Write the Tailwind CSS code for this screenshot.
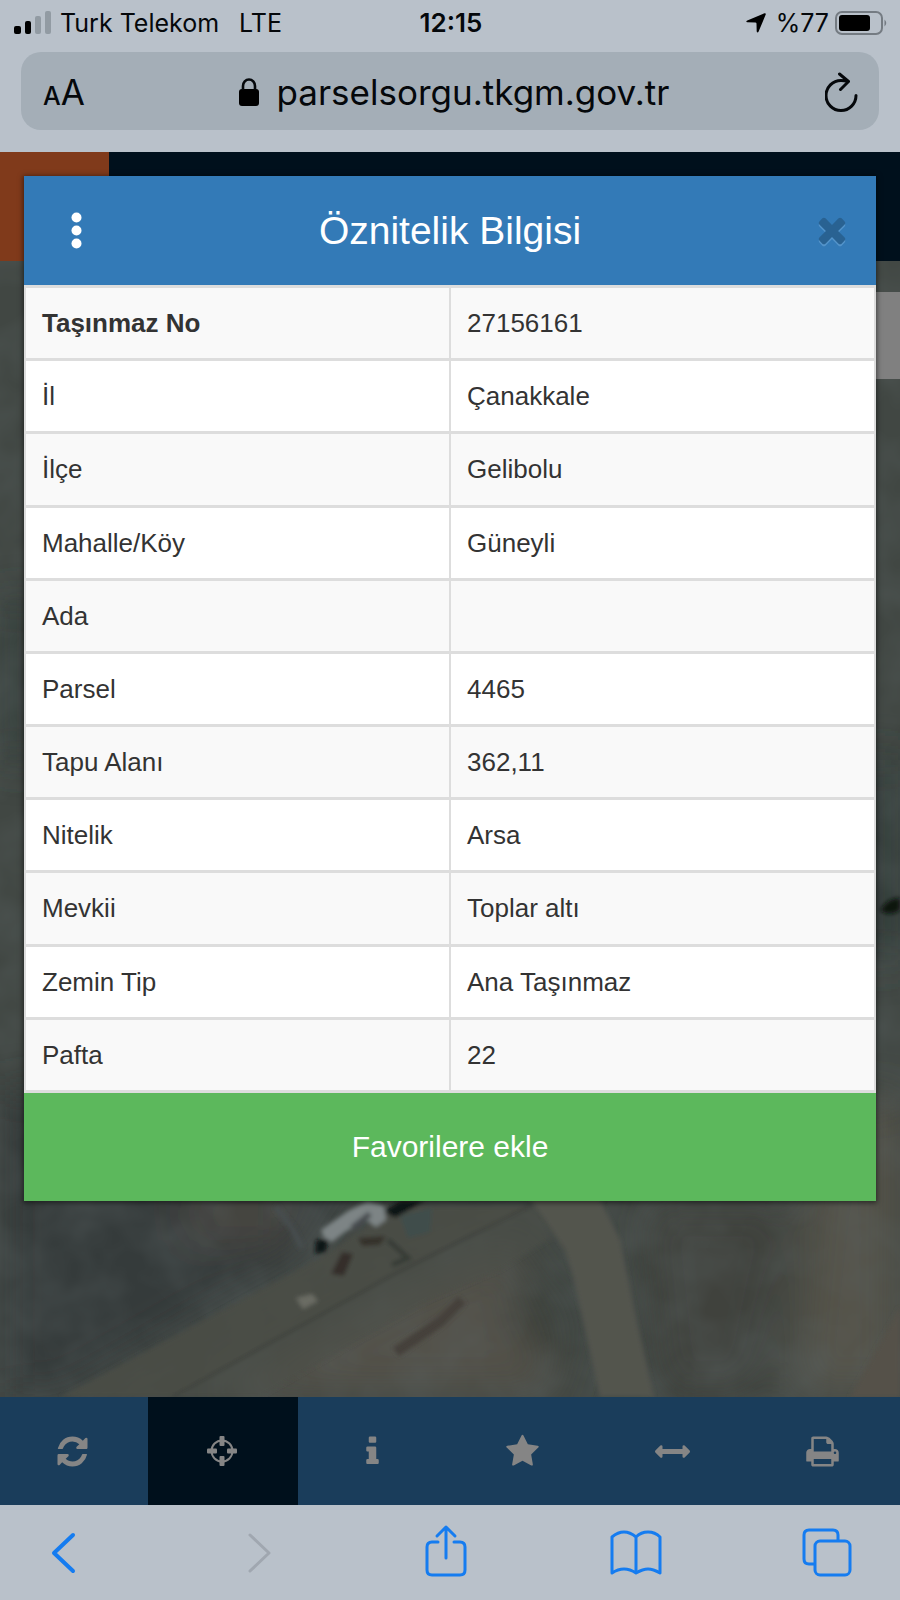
<!DOCTYPE html>
<html lang="tr">
<head>
<meta charset="utf-8">
<meta name="viewport" content="width=device-width, initial-scale=1">
<title>Öznitelik Bilgisi</title>
<script src="https://cdn.jsdelivr.net/npm/@tailwindcss/browser@4"></script>
</head>
<body class="flex min-h-screen flex-col bg-[#b9c1ca] font-['Liberation_Sans',Arial,sans-serif] text-[#333]">

<!-- Status bar and address bar -->
<header class="font-['Inter',sans-serif] text-[#05080b]">
  <div class="grid h-[46px] grid-cols-[1fr_auto_1fr] items-center pr-3 pl-3.5 text-[25px] leading-none">
    <div class="flex items-center gap-2">
      <svg class="h-6 w-[38px]" viewBox="0 0 38 24" aria-hidden="true">
        <rect x="0" y="15" width="7" height="8" rx="2"/>
        <rect x="11" y="10" width="6" height="13" rx="2"/>
        <rect x="21" y="5" width="6" height="18" rx="2" fill="#929ba3"/>
        <rect x="31" y="0" width="6" height="23" rx="2" fill="#929ba3"/>
      </svg>
      <span>Turk Telekom</span>
      <span class="ml-3">LTE</span>
    </div>
    <time class="text-[26px] font-semibold">12:15</time>
    <div class="flex items-center justify-end gap-1.5">
      <svg class="mr-1 h-5 w-5" viewBox="0 0 20 20" aria-hidden="true"><path d="M18.500 0.300Q20.200 0 19.700 1.600L12.500 18.800Q11.500 20.500 10.700 18.500L10.500 10.500Q10.400 9.400 9.300 9.400L1.300 9.200Q-.7 8.500 1.300 7.500Z"/></svg>
      <span>%77</span>
      <svg class="h-6 w-[53px]" viewBox="0 0 53 24" aria-hidden="true">
        <rect x="1" y="1" width="46" height="22" rx="6" fill="none" stroke="#747b82" stroke-width="2"/>
        <rect x="4" y="4" width="31" height="16" rx="3"/>
        <path d="M49.500 8.500Q53 12 49.500 15.500Z" fill="#747b82"/>
      </svg>
    </div>
  </div>
  <div class="mx-[21px] mt-1.5 mb-[22px] grid h-[78px] grid-cols-[1fr_auto_1fr] items-center rounded-[20px] bg-[#a4aeb7] px-5">
    <button type="button" aria-label="Metin boyutu" class="flex items-baseline justify-self-start pt-0.5 pl-0.5 leading-none"><span class="text-[25px] font-medium">A</span><span class="text-[35px]">A</span></button>
    <button type="button" class="flex items-center gap-[18px] pt-0.5 pl-2 text-[35px] leading-none">
      <svg class="h-7 w-5" viewBox="0 0 20 28" aria-hidden="true"><rect x="0" y="11" width="20" height="17" rx="3"/><path d="M4 12V8a6 6.500 0 0 1 12 0v4" fill="none" stroke="currentColor" stroke-width="2.600"/></svg>
      <span>parselsorgu.tkgm.gov.tr</span>
    </button>
    <button type="button" aria-label="Yenile" class="justify-self-end pt-0.5">
      <svg class="h-10 w-[34px]" viewBox="0 0 34 40" fill="none" stroke="currentColor" stroke-width="3" stroke-linecap="round" stroke-linejoin="round"><path d="M31 23.500A15 15 0 1 1 16 8.500Q19 8.500 23 9.500M14.500 2L23.500 9.500L15.500 17.500"/></svg>
    </button>
  </div>
</header>

<main class="relative flex-1 overflow-hidden bg-[#3c423f]">
  <!-- Page under the dialog, dimmed -->
  <div class="absolute inset-0 flex flex-col" aria-hidden="true">
    <div class="flex h-[109px] shrink-0 bg-[#00101c]"><div class="w-[109px] bg-[#803a1b]"></div></div>
    <div class="relative flex-1">
      <svg class="absolute inset-0 h-full w-full" viewBox="0 261 900 1136" preserveAspectRatio="xMidYMax slice">
        <defs>
          <filter id="soft" x="-50%" y="-50%" width="200%" height="200%"><feGaussianBlur stdDeviation="22"/></filter>
          <filter id="edge"><feGaussianBlur stdDeviation="2"/></filter>
          <filter id="grain" x="0" y="0" width="100%" height="100%"><feTurbulence type="fractalNoise" baseFrequency="0.018" numOctaves="3" seed="8"/><feColorMatrix values="0 0 0 0 0.100  0 0 0 0 0.120  0 0 0 0 0.120  0.700 0 0 0 -0.230"/></filter>
        </defs>
        <rect y="261" width="900" height="1136" fill="#414743"/>
        <g filter="url(#soft)">
          <path d="M0 1090H420L300 1260L60 1397H0Z" fill="#343b3b"/>
          <path d="M0 600H40V760H0Z" fill="#39433f"/>
          <path d="M860 760H900V960H860Z" fill="#2f3b37"/>
          <path d="M200 1397L400 1290L520 1240L560 1397Z" fill="#53514a"/>
          <path d="M640 1200H800L760 1397H660Z" fill="#3f423e"/>
          <path d="M820 1100H900V1397H790Z" fill="#54524a"/>
          <path d="M510 1270L565 1290L580 1360L520 1340Z" fill="#393d39"/>
          <path d="M180 1190H290V1240H190Z" fill="#484742"/>
        </g>
        <rect y="261" width="900" height="1136" filter="url(#grain)"/>
        <g filter="url(#edge)">
          <path d="M60 1397L321 1257L396 1206H534L396 1273L172 1397Z" fill="#4a4c47" fill-opacity="0.850"/>
          <path d="M172 1397L396 1273L534 1204L552 1238L500 1270L430 1300L260 1397Z" fill="#4b4f49" fill-opacity="0.600"/>
          <path d="M172 1397L396 1273L534 1204" fill="none" stroke="#3a3d39" stroke-width="2"/>
          <path d="M528 1196L565 1250L574 1280L600 1397H654L637 1323L620 1240L598 1196Z" fill="#53544e"/>
          <path d="M850 1397L900 1307V1397Z" fill="#545149"/>
          <path d="M384 1211L400 1201H425L395 1218Z" fill="#101613"/>
          <path d="M321 1230L348 1211L368 1201L384 1206L386 1220L376 1227L366 1220L345 1232L332 1242L324 1238Z" fill="#7d8485"/>
          <path d="M352 1228L370 1214" stroke="#474c50" stroke-width="6"/>
          <path d="M316 1240L328 1239L326 1252L315 1254Z" fill="#101614"/>
          <path d="M342 1252L353 1254L344 1276L331 1274Z" fill="#342f29"/>
          <path d="M358 1238L386 1236L380 1245L362 1246Z" fill="#36302b"/>
          <path d="M388 1240L408 1258L392 1265" fill="none" stroke="#363b36" stroke-width="5"/>
          <path d="M400 1216L432 1208L430 1232L408 1238Z" fill="#414e4b"/>
          <path d="M296 1298L312 1294L318 1301L303 1309Z" fill="#6b6c64"/>
          <path d="M276 1207L292 1228L302 1248" fill="none" stroke="#474e4f" stroke-width="5"/>
          <path d="M396 1352L440 1322L462 1300" fill="none" stroke="#45413a" stroke-width="10"/>
          <path d="M881 909Q888 898 900 898V910Q890 917 881 911Z" fill="#0b120e"/>
        </g>
      </svg>
      <div class="absolute top-[31px] right-0 h-[87px] w-12 bg-[#808080]"></div>
    </div>
  </div>

  <!-- Dialog -->
  <section role="dialog" aria-labelledby="dialog-title" class="relative mx-6 mt-6 mb-[196px] bg-white shadow-[0_1px_5px_1px_rgba(0,0,0,0.5)]">
    <div class="grid h-[109px] grid-cols-[1fr_auto_1fr] items-center bg-[#337ab7] px-6 text-white">
      <button type="button" aria-label="Menü" class="justify-self-start px-4">
        <svg class="h-10 w-6" viewBox="0 0 24 40" fill="currentColor"><circle cx="12.500" cy="6.500" r="5"/><circle cx="12.500" cy="19.500" r="5"/><circle cx="12.500" cy="32.500" r="5"/></svg>
      </button>
      <h1 id="dialog-title" class="text-[39px] leading-none">Öznitelik Bilgisi</h1>
      <button type="button" aria-label="Kapat" class="justify-self-end text-[#296292]">
        <svg class="h-10 w-10 drop-shadow-[0_2px_0_#5494ca]" viewBox="0 64 1792 1792" fill="currentColor"><path d="M1490 1322q0 40-28 68l-136 136q-28 28-68 28t-68-28l-294-294-294 294q-28 28-68 28t-68-28l-136-136q-28-28-28-68t28-68l294-294-294-294q-28-28-28-68t28-68l136-136q28-28 68-28t68 28l294 294 294-294q28-28 68-28t68 28l136 136q28 28 28 68t-28 68l-294 294 294 294q28 28 28 68z"/></svg>
      </button>
    </div>
    <table class="h-[808px] w-full table-fixed border-collapse text-left text-[26px] leading-9 [&_td]:border-x-2 [&_td]:border-y-3 [&_td]:border-[#ddd] [&_td]:px-4 [&_th]:border-x-2 [&_th]:border-y-3 [&_th]:border-[#ddd] [&_th]:px-4 [&_th]:font-normal [&_tr:nth-child(odd)]:bg-[#f9f9f9]">
      <tbody>
        <tr><th scope="row"><strong class="font-bold">Taşınmaz No</strong></th><td>27156161</td></tr>
        <tr><th scope="row">İl</th><td>Çanakkale</td></tr>
        <tr><th scope="row">İlçe</th><td>Gelibolu</td></tr>
        <tr><th scope="row">Mahalle/Köy</th><td>Güneyli</td></tr>
        <tr><th scope="row">Ada</th><td></td></tr>
        <tr><th scope="row">Parsel</th><td>4465</td></tr>
        <tr><th scope="row">Tapu Alanı</th><td>362,11</td></tr>
        <tr><th scope="row">Nitelik</th><td>Arsa</td></tr>
        <tr><th scope="row">Mevkii</th><td>Toplar altı</td></tr>
        <tr><th scope="row">Zemin Tip</th><td>Ana Taşınmaz</td></tr>
        <tr><th scope="row">Pafta</th><td>22</td></tr>
      </tbody>
    </table>
    <button type="button" class="block h-[108px] w-full bg-[#5cb85c] text-[30px] leading-none text-white">Favorilere ekle</button>
  </section>
</main>

<!-- Map tools -->
<nav aria-label="Harita araçları" class="overflow-hidden bg-[#1a3d5b] text-[#858585]">
  <div class="mr-0.5 -ml-0.5 grid h-[108px] grid-cols-6 [&>button]:pr-0.5">
    <button type="button" aria-label="Yenile" class="flex items-center justify-center"><svg class="h-[35px] w-[35px]" viewBox="0 0 1792 1792" fill="currentColor"><path d="M1639 1056q0 5-1 7-64 268-268 434.500t-478 166.500q-146 0-282.500-55t-243.500-157l-129 129q-19 19-45 19t-45-19-19-45v-448q0-26 19-45t45-19h448q26 0 45 19t19 45-19 45l-137 137q71 66 161 102t187 36q134 0 250-65t186-179q11-17 53-117 8-23 30-23h192q13 0 22.500 9.500t9.500 22.500zm25-800v448q0 26-19 45t-45 19h-448q-26 0-45-19t-19-45 19-45l138-138q-148-137-349-137-134 0-250 65t-186 179q-11 17-53 117-8 23-30 23h-199q-13 0-22.500-9.500t-9.500-22.500v-7q65-268 270-434.500t480-166.500q146 0 284 55.500t245 156.500l130-129q19-19 45-19t45 19 19 45z"/></svg></button>
    <button type="button" aria-label="Konum" aria-pressed="true" class="flex items-center justify-center bg-[#00101c]"><svg class="h-[30px] w-[30px]" viewBox="0 0 30 30" fill="currentColor"><circle cx="15" cy="15" r="10.500" fill="none" stroke="currentColor" stroke-width="2"/><rect x="12.500" y="0" width="5" height="10" rx="1"/><rect x="12.500" y="20" width="5" height="10" rx="1"/><rect x="0" y="12.500" width="10" height="5" rx="1"/><rect x="20" y="12.500" width="10" height="5" rx="1"/></svg></button>
    <button type="button" aria-label="Bilgi" class="flex items-center justify-center"><svg class="h-[35px] w-[35px]" viewBox="0 0 1792 1792" fill="currentColor"><path d="M1216 1344v128q0 26-19 45t-45 19h-512q-26 0-45-19t-19-45v-128q0-26 19-45t45-19h64v-384h-64q-26 0-45-19t-19-45v-128q0-26 19-45t45-19h384q26 0 45 19t19 45v576h64q26 0 45 19t19 45zm-128-1152v192q0 26-19 45t-45 19h-256q-26 0-45-19t-19-45v-192q0-26 19-45t45-19h256q26 0 45 19t19 45z"/></svg></button>
    <button type="button" aria-label="Favoriler" class="flex items-center justify-center"><svg class="h-[35px] w-[35px]" viewBox="0 0 1792 1792" fill="currentColor"><path d="M1728 647q0 22-26 48l-363 354 86 500q1 7 1 20 0 21-10.500 35.500t-30.500 14.500q-19 0-40-12l-449-236-449 236q-22 12-40 12-21 0-31.500-14.500t-10.500-35.500q0-6 2-20l86-500-364-354q-25-27-25-48 0-37 56-46l502-73 225-455q19-41 49-41t49 41l225 455 502 73q56 9 56 46z"/></svg></button>
    <button type="button" aria-label="Ölç" class="flex items-center justify-center"><svg class="h-[35px] w-[35px]" viewBox="0 0 1792 1792" fill="currentColor"><path d="M1792 896q0 26-19 45l-256 256q-19 19-45 19t-45-19-19-45v-128h-1024v128q0 26-19 45t-45 19-45-19l-256-256q-19-19-19-45t19-45l256-256q19-19 45-19t45 19 19 45v128h1024v-128q0-26 19-45t45-19 45 19l256 256q19 19 19 45z"/></svg></button>
    <button type="button" aria-label="Yazdır" class="flex items-center justify-center"><svg class="h-[35px] w-[35px]" viewBox="0 0 1792 1792" fill="currentColor"><path d="M448 1536h896v-256h-896v256zm0-640h896v-384h-160q-40 0-68-28t-28-68v-160h-640v640zm1152 64q0-26-19-45t-45-19-45 19-19 45 19 45 45 19 45-19 19-45zm128 0v416q0 13-9.500 22.500t-22.500 9.500h-224v160q0 40-28 68t-68 28h-960q-40 0-68-28t-28-68v-160h-224q-13 0-22.500-9.500t-9.500-22.500v-416q0-79 56.500-135.500t135.500-56.500h64v-544q0-40 28-68t68-28h672q40 0 88 20t76 48l152 152q28 28 48 76t20 88v256h64q79 0 135.500 56.500t56.500 135.500z"/></svg></button>
  </div>
</nav>

<!-- Browser toolbar -->
<nav aria-label="Tarayıcı" class="flex h-[95px] items-center justify-between pr-12 pl-[38px] text-[#157cf0]">
  <button type="button" aria-label="Geri"><svg class="h-[60px] w-[52px]" viewBox="0 0 52 60" fill="none" stroke="currentColor" stroke-width="4" stroke-linecap="round" stroke-linejoin="round"><path d="M35 12L16 30L35 48"/></svg></button>
  <button type="button" aria-label="İleri" disabled class="text-[#a0a7b0]"><svg class="h-[60px] w-[52px]" viewBox="0 0 52 60" fill="none" stroke="currentColor" stroke-width="3" stroke-linecap="round" stroke-linejoin="round"><path d="M21 12L40 30L21 48"/></svg></button>
  <button type="button" aria-label="Paylaş"><svg class="h-[60px] w-[52px]" viewBox="0 0 52 60" fill="none" stroke="currentColor" stroke-width="3" stroke-linecap="round" stroke-linejoin="round"><path d="M19 19H13Q8 19 8 24V47Q8 52 13 52H41Q46 52 46 47V24Q46 19 41 19H35M27 35V4M18 13L27 4L36 13"/></svg></button>
  <button type="button" aria-label="Yer imleri"><svg class="h-[60px] w-[52px]" viewBox="0 0 52 60" fill="none" stroke="currentColor" stroke-width="3" stroke-linecap="round" stroke-linejoin="round"><path d="M26 14V50M26 14Q20 9 14 9T2 14V50Q8 46 14 46T26 50Q33 46 38 46T50 50V14Q45 9 38 9T26 14"/></svg></button>
  <button type="button" aria-label="Sekmeler"><svg class="h-[60px] w-[52px]" viewBox="0 0 52 60" fill="none" stroke="currentColor" stroke-width="3" stroke-linecap="round" stroke-linejoin="round"><path d="M14 41H9Q4 41 4 36V12Q4 7 9 7H33Q38 7 38 12V17"/><rect x="15" y="18" width="35" height="34" rx="5"/></svg></button>
</nav>
</body>
</html>
